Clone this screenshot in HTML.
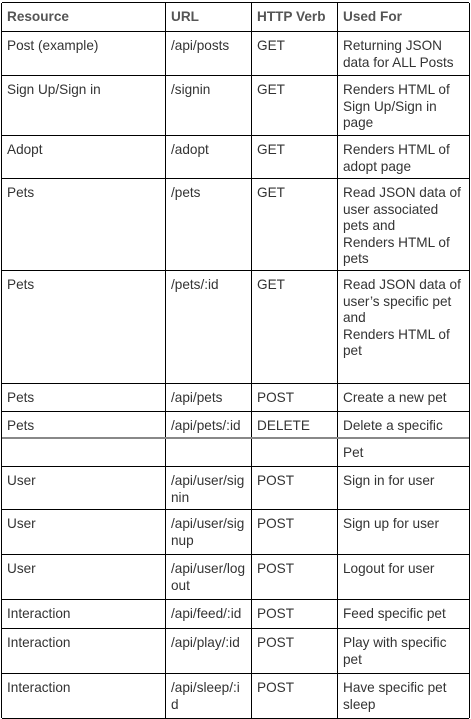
<!DOCTYPE html>
<html><head><meta charset="utf-8"><style>
body{margin:0;background:#fff;width:471px;height:718px;overflow:hidden;position:relative;font-family:"Liberation Sans",Arial,sans-serif;font-size:13.6px;color:#333;}
.r{position:absolute;left:2px;width:467px;border-top:1px solid #000;}
.c{position:absolute;top:0;bottom:0;padding:6px 4px 0 5px;line-height:16.5px;box-sizing:border-box;border-left:1px solid #000;}
.c1{left:-1px;width:164px}.c2{left:163px;width:86px}.c3{left:249px;width:86px}.c4{left:335px;width:133px;border-right:1px solid #000}
.h{font-weight:bold;color:#555}
</style></head><body>
<div class="r h" style="top:2px;height:29px"><div class="c c1">Resource</div><div class="c c2">URL</div><div class="c c3">HTTP Verb</div><div class="c c4">Used For</div></div>
<div class="r" style="top:31px;height:44px"><div class="c c1">Post (example)</div><div class="c c2">/api/posts</div><div class="c c3">GET</div><div class="c c4">Returning JSON<br>data for ALL Posts</div></div>
<div class="r" style="top:75px;height:60px"><div class="c c1">Sign Up/Sign in</div><div class="c c2">/signin</div><div class="c c3">GET</div><div class="c c4">Renders HTML of<br>Sign Up/Sign in<br>page</div></div>
<div class="r" style="top:135px;height:43px"><div class="c c1">Adopt</div><div class="c c2">/adopt</div><div class="c c3">GET</div><div class="c c4">Renders HTML of<br>adopt page</div></div>
<div class="r" style="top:178px;height:92px"><div class="c c1">Pets</div><div class="c c2">/pets</div><div class="c c3">GET</div><div class="c c4">Read JSON data of<br>user associated<br>pets and<br>Renders HTML of<br>pets</div></div>
<div class="r" style="top:270px;height:113px"><div class="c c1">Pets</div><div class="c c2">/pets/:id</div><div class="c c3">GET</div><div class="c c4">Read JSON data of<br>user’s specific pet<br>and<br>Renders HTML of<br>pet</div></div>
<div class="r" style="top:383px;height:28px"><div class="c c1">Pets</div><div class="c c2">/api/pets</div><div class="c c3">POST</div><div class="c c4">Create a new pet</div></div>
<div class="r" style="top:411px;height:27px"><div class="c c1">Pets</div><div class="c c2">/api/pets/:id</div><div class="c c3">DELETE</div><div class="c c4">Delete a specific</div></div>
<div class="r" style="top:437px;height:29px;border-top:2px solid #888"><div class="c c1"></div><div class="c c2"></div><div class="c c3"></div><div class="c c4">Pet</div></div>
<div class="r" style="top:466px;height:43px"><div class="c c1">User</div><div class="c c2">/api/user/sig<br>nin</div><div class="c c3">POST</div><div class="c c4">Sign in for user</div></div>
<div class="r" style="top:509px;height:45px"><div class="c c1">User</div><div class="c c2">/api/user/sig<br>nup</div><div class="c c3">POST</div><div class="c c4">Sign up for user</div></div>
<div class="r" style="top:554px;height:45px"><div class="c c1">User</div><div class="c c2">/api/user/log<br>out</div><div class="c c3">POST</div><div class="c c4">Logout for user</div></div>
<div class="r" style="top:599px;height:29px"><div class="c c1">Interaction</div><div class="c c2">/api/feed/:id</div><div class="c c3">POST</div><div class="c c4">Feed specific pet</div></div>
<div class="r" style="top:628px;height:45px"><div class="c c1">Interaction</div><div class="c c2">/api/play/:id</div><div class="c c3">POST</div><div class="c c4">Play with specific<br>pet</div></div>
<div class="r" style="top:673px;height:44px;border-bottom:1px solid #000"><div class="c c1">Interaction</div><div class="c c2">/api/sleep/:i<br>d</div><div class="c c3">POST</div><div class="c c4">Have specific pet<br>sleep</div></div>
</body></html>
